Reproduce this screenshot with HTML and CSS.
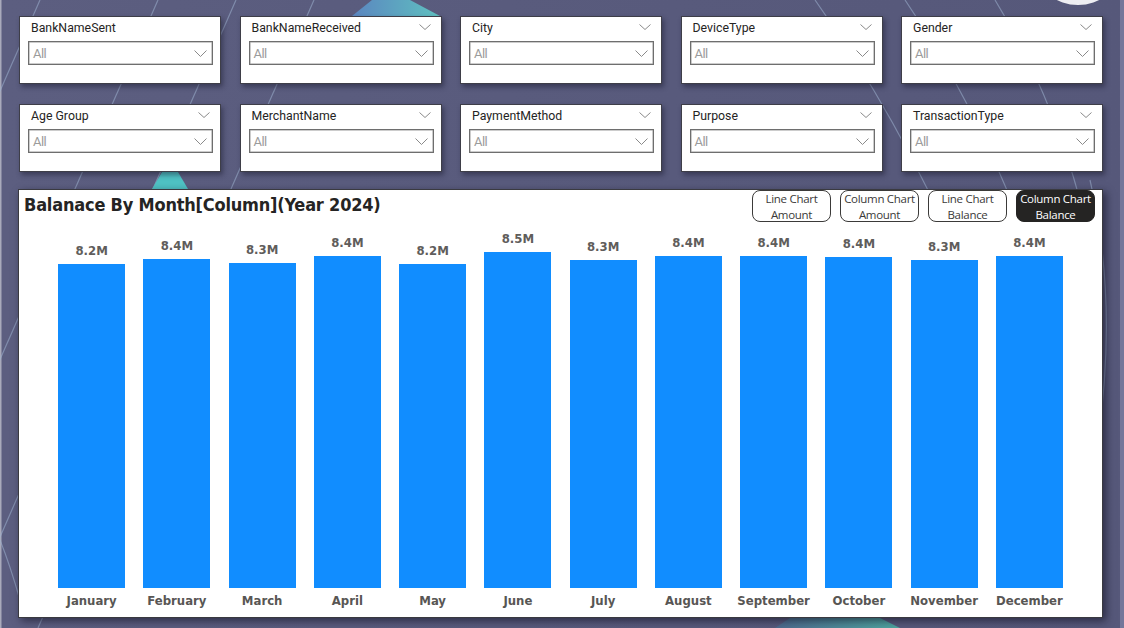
FILE: index.html
```html
<!DOCTYPE html>
<html lang="en">
<head>
<meta charset="utf-8">
<title>Balance By Month</title>
<link rel="stylesheet" href="styles.css">
</head>
<body>
<div class="canvas">
  <svg class="backdrop" width="1124" height="628" viewBox="0 0 1124 628" aria-hidden="true">
    <g stroke="#9fb3cf" stroke-opacity="0.55" stroke-width="1.2" fill="none">
      <line x1="40" y1="0" x2="-236" y2="628"/>
      <line x1="158" y1="0" x2="-118" y2="628"/>
      <line x1="236" y1="0" x2="-40" y2="628"/>
      <line x1="314" y1="0" x2="38" y2="628"/>
      <path d="M0 540 Q10 565 20 600"/>
      <path d="M815 0 Q900 120 960 260"/>
      <path d="M905 0 Q980 110 1030 250"/>
      <path d="M995 0 Q1050 90 1080 200"/>
      <path d="M1090 180 Q1118 300 1098 440"/>
    </g>
    <polygon points="152,189 188,189 178,172 162,172" fill="#4fc2c4"/>
    <polygon points="352,16 440,16 410,0 372,0" fill="url(#tg)"/>
    <polygon points="775,628 900,628 880,618 790,618" fill="url(#bg2)"/>
    <ellipse cx="1078" cy="-28" rx="40" ry="33" fill="#eeeef2"/>
    <defs>
      <linearGradient id="tg" x1="0" y1="0" x2="1" y2="0">
        <stop offset="0" stop-color="#5b86c0"/>
        <stop offset="1" stop-color="#5fc0c0"/>
      </linearGradient>
      <linearGradient id="bg2" x1="0" y1="0" x2="1" y2="0">
        <stop offset="0" stop-color="#4d6a8e"/>
        <stop offset="1" stop-color="#4fa6a0"/>
      </linearGradient>
    </defs>
  </svg>

  <div class="content">
    <div class="slicers">
      <div class="slicer">
        <div class="slicer-head"><span class="slicer-title">BankNameSent</span></div>
        <div class="dropdown"><span>All</span><svg class="chev" width="13" height="7" viewBox="0 0 13 7"><path d="M0.5 0.5 L6.5 6.5 L12.5 0.5"/></svg></div>
      </div>
      <div class="slicer">
        <div class="slicer-head"><span class="slicer-title">BankNameReceived</span><svg class="chev head-chev" width="12" height="6" viewBox="0 0 12 6"><path d="M0.5 0.5 L6 5.5 L11.5 0.5"/></svg></div>
        <div class="dropdown"><span>All</span><svg class="chev" width="13" height="7" viewBox="0 0 13 7"><path d="M0.5 0.5 L6.5 6.5 L12.5 0.5"/></svg></div>
      </div>
      <div class="slicer">
        <div class="slicer-head"><span class="slicer-title">City</span><svg class="chev head-chev" width="12" height="6" viewBox="0 0 12 6"><path d="M0.5 0.5 L6 5.5 L11.5 0.5"/></svg></div>
        <div class="dropdown"><span>All</span><svg class="chev" width="13" height="7" viewBox="0 0 13 7"><path d="M0.5 0.5 L6.5 6.5 L12.5 0.5"/></svg></div>
      </div>
      <div class="slicer">
        <div class="slicer-head"><span class="slicer-title">DeviceType</span><svg class="chev head-chev" width="12" height="6" viewBox="0 0 12 6"><path d="M0.5 0.5 L6 5.5 L11.5 0.5"/></svg></div>
        <div class="dropdown"><span>All</span><svg class="chev" width="13" height="7" viewBox="0 0 13 7"><path d="M0.5 0.5 L6.5 6.5 L12.5 0.5"/></svg></div>
      </div>
      <div class="slicer">
        <div class="slicer-head"><span class="slicer-title">Gender</span><svg class="chev head-chev" width="12" height="6" viewBox="0 0 12 6"><path d="M0.5 0.5 L6 5.5 L11.5 0.5"/></svg></div>
        <div class="dropdown"><span>All</span><svg class="chev" width="13" height="7" viewBox="0 0 13 7"><path d="M0.5 0.5 L6.5 6.5 L12.5 0.5"/></svg></div>
      </div>
      <div class="slicer">
        <div class="slicer-head"><span class="slicer-title">Age Group</span><svg class="chev head-chev" width="12" height="6" viewBox="0 0 12 6"><path d="M0.5 0.5 L6 5.5 L11.5 0.5"/></svg></div>
        <div class="dropdown"><span>All</span><svg class="chev" width="13" height="7" viewBox="0 0 13 7"><path d="M0.5 0.5 L6.5 6.5 L12.5 0.5"/></svg></div>
      </div>
      <div class="slicer">
        <div class="slicer-head"><span class="slicer-title">MerchantName</span><svg class="chev head-chev" width="12" height="6" viewBox="0 0 12 6"><path d="M0.5 0.5 L6 5.5 L11.5 0.5"/></svg></div>
        <div class="dropdown"><span>All</span><svg class="chev" width="13" height="7" viewBox="0 0 13 7"><path d="M0.5 0.5 L6.5 6.5 L12.5 0.5"/></svg></div>
      </div>
      <div class="slicer">
        <div class="slicer-head"><span class="slicer-title">PaymentMethod</span><svg class="chev head-chev" width="12" height="6" viewBox="0 0 12 6"><path d="M0.5 0.5 L6 5.5 L11.5 0.5"/></svg></div>
        <div class="dropdown"><span>All</span><svg class="chev" width="13" height="7" viewBox="0 0 13 7"><path d="M0.5 0.5 L6.5 6.5 L12.5 0.5"/></svg></div>
      </div>
      <div class="slicer">
        <div class="slicer-head"><span class="slicer-title">Purpose</span><svg class="chev head-chev" width="12" height="6" viewBox="0 0 12 6"><path d="M0.5 0.5 L6 5.5 L11.5 0.5"/></svg></div>
        <div class="dropdown"><span>All</span><svg class="chev" width="13" height="7" viewBox="0 0 13 7"><path d="M0.5 0.5 L6.5 6.5 L12.5 0.5"/></svg></div>
      </div>
      <div class="slicer">
        <div class="slicer-head"><span class="slicer-title">TransactionType</span><svg class="chev head-chev" width="12" height="6" viewBox="0 0 12 6"><path d="M0.5 0.5 L6 5.5 L11.5 0.5"/></svg></div>
        <div class="dropdown"><span>All</span><svg class="chev" width="13" height="7" viewBox="0 0 13 7"><path d="M0.5 0.5 L6.5 6.5 L12.5 0.5"/></svg></div>
      </div>
    </div>

    <div class="panel">
      <div class="panel-head">
        <h1 class="chart-title">Balanace By Month[Column](Year 2024)</h1>
        <div class="toggles">
          <button class="toggle">Line Chart<br>Amount</button>
          <button class="toggle">Column Chart<br>Amount</button>
          <button class="toggle">Line Chart<br>Balance</button>
          <button class="toggle active">Column Chart<br>Balance</button>
        </div>
      </div>
      <div class="plot">
        <div class="col"><span class="val">8.2M</span><div class="bar" style="height:324px"></div></div>
        <div class="col"><span class="val">8.4M</span><div class="bar" style="height:329px"></div></div>
        <div class="col"><span class="val">8.3M</span><div class="bar" style="height:325px"></div></div>
        <div class="col"><span class="val">8.4M</span><div class="bar" style="height:332px"></div></div>
        <div class="col"><span class="val">8.2M</span><div class="bar" style="height:324px"></div></div>
        <div class="col"><span class="val">8.5M</span><div class="bar" style="height:336px"></div></div>
        <div class="col"><span class="val">8.3M</span><div class="bar" style="height:328px"></div></div>
        <div class="col"><span class="val">8.4M</span><div class="bar" style="height:332px"></div></div>
        <div class="col"><span class="val">8.4M</span><div class="bar" style="height:332px"></div></div>
        <div class="col"><span class="val">8.4M</span><div class="bar" style="height:331px"></div></div>
        <div class="col"><span class="val">8.3M</span><div class="bar" style="height:328px"></div></div>
        <div class="col"><span class="val">8.4M</span><div class="bar" style="height:332px"></div></div>
      </div>
      <div class="months">
        <span>January</span><span>February</span><span>March</span><span>April</span>
        <span>May</span><span>June</span><span>July</span><span>August</span>
        <span>September</span><span>October</span><span>November</span><span>December</span>
      </div>
    </div>
  </div>
</div>
</body>
</html>
```

FILE: styles.css
```css
* { box-sizing: border-box; }

html, body {
  margin: 0;
  padding: 0;
  width: 1124px;
  height: 628px;
  overflow: hidden;
  background: #5a5c7e;
}

.canvas {
  position: relative;
  width: 1124px;
  height: 628px;
  background: linear-gradient(90deg, #a9aabb 0, #a9aabb 1px, #5c5e80 2px, #585a7c 60%, #56587a 100%);
  overflow: hidden;
}

.canvas::after {
  content: "";
  position: absolute;
  top: 0;
  right: 0;
  width: 4px;
  height: 628px;
  background: #74769a;
}

.backdrop {
  position: absolute;
  top: 0;
  left: 0;
}

.content {
  position: relative;
  padding: 16px 21px 0 19px;
}

.slicers {
  display: grid;
  grid-template-columns: repeat(5, 202px);
  justify-content: space-between;
  row-gap: 20px;
  width: 1084px;
}

.slicer {
  height: 68px;
  background: #fff;
  border: 1px solid #3e3e48;
  box-shadow: 2px 3px 5px rgba(20, 20, 40, 0.45);
  padding: 3px 7px 0 8px;
  font-family: Roboto, "Liberation Sans", sans-serif;
}

.slicer-head {
  display: flex;
  align-items: center;
  justify-content: space-between;
  height: 21px;
  padding-left: 3px;
}

.slicer-title {
  font-size: 12.3px;
  line-height: 16px;
  color: #252423;
  align-self: flex-start;
}

.chev path {
  fill: none;
  stroke: #8a8a8a;
  stroke-width: 1;
}

.head-chev {
  margin-right: 3px;
  align-self: flex-start;
  margin-top: 4px;
}

.dropdown {
  height: 24px;
  border: 1px solid #6e6e6e;
  box-shadow: inset 0 0 0 0.5px #9a9a9a;
  display: flex;
  align-items: center;
  justify-content: space-between;
  padding: 1px 5px 0 4px;
  font-size: 13px;
  color: #9b9b9b;
}

.dropdown span {
  letter-spacing: -0.6px;
}

.panel {
  margin-top: 17px;
  margin-left: -1px;
  width: 1085px;
  height: 429px;
  background: #fff;
  border: 1px solid #3a3a40;
  box-shadow: 3px 3px 8px rgba(10, 10, 25, 0.55);
  display: flex;
  flex-direction: column;
}

.panel-head {
  display: flex;
  justify-content: space-between;
  align-items: flex-start;
  height: 32px;
  padding: 0 7px 0 5px;
}

.chart-title {
  margin: 3px 0 0 0;
  font-family: "DejaVu Sans", sans-serif;
  font-weight: bold;
  font-stretch: condensed;
  font-size: 18px;
  line-height: 24px;
  color: #252423;
  letter-spacing: -0.2px;
}

.toggles {
  display: flex;
  gap: 9px;
}

.toggle {
  width: 79px;
  height: 32px;
  border: 1px solid #3b3a39;
  border-radius: 8px;
  background: #fff;
  color: #3b3a39;
  font-family: "Open Sans", "Noto Sans", sans-serif;
  font-size: 11.5px;
  line-height: 16px;
  padding: 0;
  text-align: center;
  letter-spacing: -0.3px;
}

.toggle.active {
  background: #252423;
  color: #fff;
  border-color: #252423;
}

.plot {
  display: flex;
  align-items: flex-end;
  height: 366px;
  padding: 0 30px 0 30px;
}

.col {
  flex: 1 1 0;
  display: flex;
  flex-direction: column;
  align-items: center;
}

.val {
  font-family: "DejaVu Sans", sans-serif;
  font-weight: bold;
  font-stretch: condensed;
  font-size: 13px;
  line-height: 15px;
  color: #5f5d5b;
  margin-bottom: 6px;
}

.bar {
  width: 67px;
  background: #118dff;
}

.months {
  display: flex;
  padding: 5px 30px 0 30px;
}

.months span {
  flex: 1 1 0;
  text-align: center;
  font-family: "DejaVu Sans", sans-serif;
  font-weight: bold;
  font-stretch: condensed;
  font-size: 13px;
  line-height: 16px;
  color: #585654;
}
```
